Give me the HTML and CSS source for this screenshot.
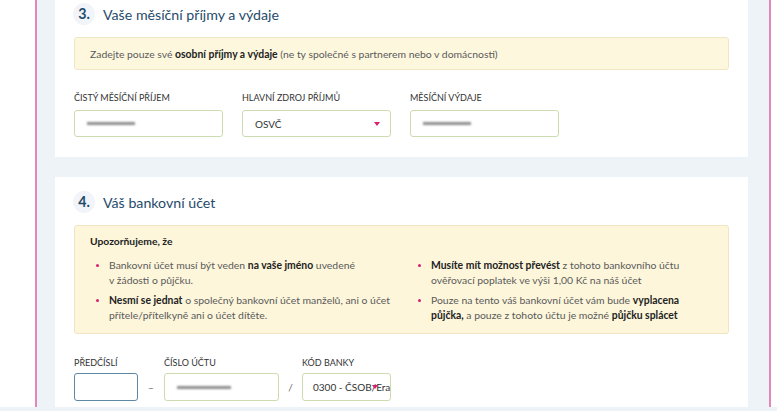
FILE: index.html
```html
<!DOCTYPE html>
<html lang="cs">
<head>
  <meta charset="UTF-8" />
  <title>Žádost o půjčku</title>
  <link rel="stylesheet" href="styles.css">
</head>
<body>

  <div class="frame">

    <section class="card card-income">
      <h2 class="step"><span class="step-num">3.</span>Vaše měsíční příjmy a výdaje</h2>

      <div class="notice">
        <span>Zadejte pouze své <b>osobní příjmy a výdaje</b> (ne ty společné s partnerem nebo v&nbsp;domácnosti)</span>
      </div>

      <div class="fields">
        <div class="field w-wide">
          <label>Čistý měsíční příjem</label>
          <div class="input"><span class="blurred"></span></div>
        </div>
        <div class="field w-wide">
          <label>Hlavní zdroj příjmů</label>
          <div class="input select"><span class="value">OSVČ</span></div>
        </div>
        <div class="field w-wide">
          <label>Měsíční výdaje</label>
          <div class="input"><span class="blurred"></span></div>
        </div>
      </div>
    </section>

    <section class="card card-bank">
      <h2 class="step"><span class="step-num">4.</span>Váš bankovní účet</h2>

      <div class="warning">
        <p class="warning-title">Upozorňujeme, že</p>
        <ul class="rules">
          <li><span>Bankovní účet musí být veden <b>na vaše jméno</b> uvedené<br>v&nbsp;žádosti o půjčku.</span></li>
          <li><span><b>Musíte mít možnost převést</b> z tohoto bankovního účtu<br>ověřovací poplatek ve výši 1,00 Kč na náš účet</span></li>
          <li><span><b>Nesmí se jednat</b> o společný bankovní účet manželů, ani o účet<br>přítele/přítelkyně ani o účet dítěte.</span></li>
          <li><span>Pouze na tento váš bankovní účet vám bude <b>vyplacena</b><br><b>půjčka,</b> a pouze z tohoto účtu je možné <b>půjčku splácet</b></span></li>
        </ul>
      </div>

      <div class="fields fields-account">
        <div class="field w-prefix">
          <label>Předčíslí</label>
          <div class="input active"></div>
        </div>
        <div class="sep sep-dash">–</div>
        <div class="field w-number">
          <label>Číslo účtu</label>
          <div class="input"><span class="blurred long"></span></div>
        </div>
        <div class="sep sep-slash">/</div>
        <div class="field w-bank">
          <label>Kód banky</label>
          <div class="input select bank"><span class="value">0300 - ČSOB/Era</span></div>
        </div>
      </div>
    </section>

  </div>
  <div class="bottom-strip"></div>

</body>
</html>
```

FILE: styles.css
```css
body {
  margin: 0;
  background-color: #fff;
  font-family: Lato, "Open Sans", sans-serif;
  color: #5a5a5a;
}

.frame {
  height: 407px;
  overflow: hidden;
  margin: 0 6px 0 35px;
  padding: 0 21px 0 18px;
  background-color: #eef3f8;
  border-left: 2px solid #e487b8;
  border-right: 2px solid #e487b8;
}

.bottom-strip {
  height: 4px;
  background-color: #eef3f8;
}

.card {
  background-color: #fff;
  padding: 0 19px 20px 19px;
}

.card-bank {
  margin-top: 20px;
  padding-top: 11px;
}

.step {
  display: flex;
  align-items: center;
  height: 28px;
  margin: 0;
  font-size: 14.2px;
  font-weight: normal;
  color: #1f4b6b;
}

.step-num {
  width: 22px;
  height: 22px;
  line-height: 22px;
  margin: 0 8px 0 -1px;
  border-radius: 50%;
  background-color: #f1f4f8;
  text-align: center;
  font-weight: bold;
}

.notice {
  display: flex;
  align-items: center;
  height: 33px;
  box-sizing: border-box;
  margin-top: 9px;
  padding: 0 15px;
  font-size: 10.4px;
  background-color: #fdf7de;
  border: 1px solid #efe7c4;
  border-radius: 3px;
}

.notice b, .warning b {
  color: #222;
}

.fields {
  display: flex;
  gap: 19px;
  margin-top: 22px;
}

.field label {
  display: block;
  font-size: 9px;
  line-height: 12px;
  text-transform: uppercase;
  color: #333;
  margin-bottom: 6px;
}

.w-wide { width: 149px; }
.w-prefix { width: 64px; }
.w-number { width: 115px; }
.w-bank { width: 89px; }

.input {
  position: relative;
  display: flex;
  align-items: center;
  height: 27px;
  box-sizing: border-box;
  padding: 0 12px;
  border: 1px solid #ccdcb0;
  border-radius: 3px;
  font-size: 10px;
  color: #333;
  overflow: hidden;
  white-space: nowrap;
}

.input.active {
  border-color: #5f88a6;
}

.select::after {
  content: "";
  position: absolute;
  right: 10px;
  top: 11px;
  border-left: 3px solid transparent;
  border-right: 3px solid transparent;
  border-top: 4px solid #d81f6e;
}

.bank {
  padding-left: 10px;
}

.bank::after {
  right: 12px;
}

.blurred {
  width: 48px;
  height: 3px;
  background-color: #8d8d8d;
  filter: blur(1px);
}

.blurred.long {
  width: 54px;
}

/* bank account warning */
.warning {
  margin-top: 9px;
  padding: 8px 15px 10px 15px;
  background-color: #fdf6da;
  border: 1px solid #efe5c0;
  border-radius: 3px;
  font-size: 10.4px;
}

.warning-title {
  margin: 0;
  line-height: 14px;
  font-size: 10.3px;
  font-weight: bold;
  color: #222;
}

.rules {
  display: grid;
  grid-template-columns: 1fr 1fr;
  column-gap: 21px;
  row-gap: 5px;
  margin: 10px 0 0 0;
  padding: 0;
  list-style: none;
  line-height: 15px;
}

.rules li {
  display: flex;
}

.rules li::before {
  content: "";
  flex: none;
  width: 3px;
  height: 3px;
  margin: 6px 10px 0 6px;
  border-radius: 50%;
  background-color: #d81f6e;
}

.fields-account {
  gap: 0;
  margin-top: 23px;
}

.fields-account .input {
  height: 28px;
}

.fields-account .field label {
  margin-bottom: 4px;
}

.sep {
  align-self: flex-end;
  display: flex;
  align-items: center;
  justify-content: center;
  height: 28px;
  font-size: 10px;
  color: #666;
}

.sep-dash { width: 26px; }
.sep-slash { width: 23px; }
```
